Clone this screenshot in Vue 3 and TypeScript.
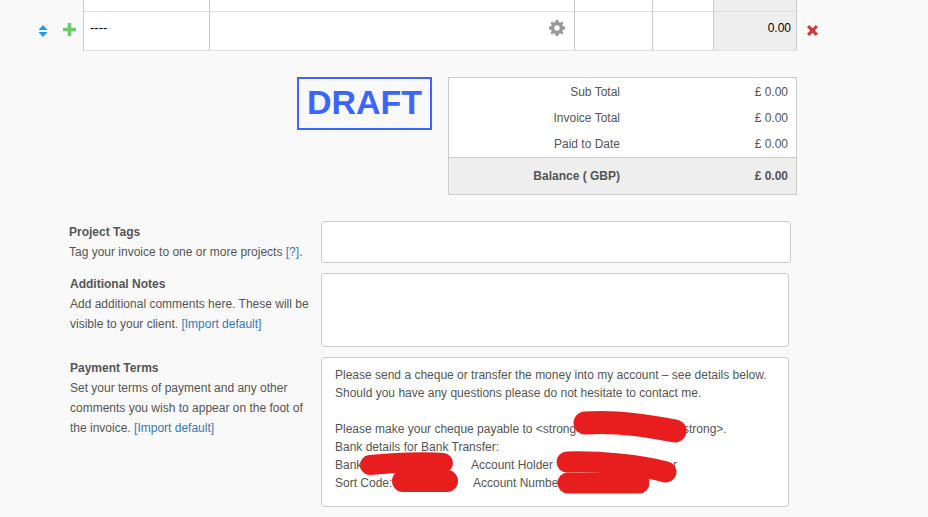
<template>
  <div class="page">
    <!-- line items -->
    <div class="items">
      <div class="row-tools">
        <svg class="sort" width="10" height="12" viewBox="0 0 10 12"><path d="M5 0 9.5 5H.5zM.5 7H9.5L5 12z" fill="#1e96f5" /></svg>
        <svg class="plus" width="13" height="13" viewBox="0 0 13 13"><path d="M4.7 0H8.3V4.7H13V8.3H8.3V13H4.7V8.3H0V4.7H4.7z" fill="#6cc96c" /></svg>
      </div>
      <div class="grid">
        <div class="cell top"></div>
        <div class="cell top"></div>
        <div class="cell top"></div>
        <div class="cell top"></div>
        <div class="cell top amount"></div>
        <div class="cell item-name">----</div>
        <div class="cell gear-cell">
          <svg width="16" height="16" viewBox="0 0 16 16">
            <path fill="#999" fill-rule="evenodd" d="M6.6 0H9.4L9.8 2.1 11.2 2.7 13 1.5 14.5 3 13.3 4.8 13.9 6.2 16 6.6V9.4L13.9 9.8 13.3 11.2 14.5 13 13 14.5 11.2 13.3 9.8 13.9 9.4 16H6.6L6.2 13.9 4.8 13.3 3 14.5 1.5 13 2.7 11.2 2.1 9.8 0 9.4V6.6L2.1 6.2 2.7 4.8 1.5 3 3 1.5 4.8 2.7 6.2 2.1ZM8 5.3A2.7 2.7 0 1 0 8 10.7 2.7 2.7 0 1 0 8 5.3Z" />
          </svg>
        </div>
        <div class="cell"></div>
        <div class="cell"></div>
        <div class="cell amount total-cell">0.00</div>
      </div>
      <svg class="remove" width="11" height="11" viewBox="0 0 11 11"><path d="M2.2 0 5.5 3.3 8.8 0 11 2.2 7.7 5.5 11 8.8 8.8 11 5.5 7.7 2.2 11 0 8.8 3.3 5.5 0 2.2z" fill="#cf3a35" /></svg>
    </div>

    <!-- draft stamp and totals -->
    <div class="summary">
      <div class="draft">DRAFT</div>
      <div class="totals">
        <div v-for="row in totals" :key="row" class="total-row">
          <span class="total-label">{{ row }}</span>
          <span class="total-value">£ 0.00</span>
        </div>
        <div class="balance">
          <span class="total-label">Balance ( GBP)</span>
          <span class="total-value">£ 0.00</span>
        </div>
      </div>
    </div>

    <!-- notes fields -->
    <div class="field tags">
      <div class="field-text tags-text">
        <strong>Project Tags</strong>
        <p>Tag your invoice to one or more projects <a>[?]</a>.</p>
      </div>
      <div class="box tags-box"></div>
    </div>
    <div class="field notes">
      <div class="field-text">
        <strong>Additional Notes</strong>
        <p>Add additional comments here. These will be</p>
        <p>visible to your client. <a>[Import default]</a></p>
      </div>
      <div class="box notes-box"></div>
    </div>
    <div class="field terms">
      <div class="field-text">
        <strong>Payment Terms</strong>
        <p>Set your terms of payment and any other</p>
        <p>comments you wish to appear on the foot of</p>
        <p>the invoice. <a>[Import default]</a></p>
      </div>
      <div class="box terms-box">
        <div v-for="(line, i) in termsLines" :key="i" class="terms-line">
          <span
            v-for="part in line"
            :key="part.text"
            class="terms-part"
            :style="part.width ? { width: part.width + 'px' } : undefined"
          >{{ part.text }}</span>
        </div>
      </div>
    </div>

    <!-- red marker over private details -->
    <svg class="scribble" width="928" height="517" viewBox="0 0 928 517">
      <g fill="none" stroke="#e81e1e" stroke-linecap="round" stroke-linejoin="round">
        <path d="M585 423 C610 421 640 424 675 431" stroke-width="23" />
        <path d="M370 465 C390 463 425 461 443 463" stroke-width="20" />
        <path d="M403 481 H447" stroke-width="22" />
        <path d="M567 462 C600 461 640 465 666 472" stroke-width="21" />
        <path d="M568 483 H639" stroke-width="21" />
      </g>
    </svg>
  </div>
</template>

<script setup lang="ts">
interface TermsPart {
  text: string
  width?: number
}

const totals = ['Sub Total', 'Invoice Total', 'Paid to Date']

// widths leave room for the parts hidden under the marker
const termsLines: TermsPart[][] = [
  [{ text: 'Please send a cheque or transfer the money into my account – see details below.' }],
  [{ text: 'Should you have any questions please do not hesitate to contact me.' }],
  [{ text: '\u00a0' }],
  [{ text: 'Please make your cheque payable to <strong', width: 348 }, { text: 'strong>.' }],
  [{ text: 'Bank details for Bank Transfer:' }],
  [{ text: 'Bank', width: 136 }, { text: 'Account Holder', width: 202 }, { text: 'r' }],
  [{ text: 'Sort Code:', width: 138 }, { text: 'Account Numbe' }],
]
</script>

<style>
html,
body {
  margin: 0;
  background: #f9f9f9;
  overflow: hidden;
}
</style>

<style scoped>
.page {
  position: relative;
  width: 928px;
  height: 517px;
  overflow: hidden;
  background: #f9f9f9;
  font-family: "Liberation Sans", Arial, sans-serif;
  font-size: 12px;
  color: #555;
}

.items {
  display: flex;
  align-items: flex-start;
  height: 77px;
}

.row-tools {
  display: flex;
  align-items: flex-start;
  width: 83px;
  height: 13px;
  margin-top: 23px;
  padding-left: 38px;
  box-sizing: border-box;
}

.sort {
  margin-top: 2px;
}

.plus {
  margin-left: 15px;
}

.grid {
  display: grid;
  grid-template-columns: 126px 365px 78px 61px 83px;
  grid-template-rows: 12px 39px;
  width: 714px;
  border-left: 1px solid #ccc;
  box-sizing: border-box;
}

.cell {
  background: #fff;
  border-right: 1px solid #ccc;
  border-bottom: 1px solid #e0e0e0;
  box-sizing: border-box;
}

.amount {
  background: #eee;
}

.item-name {
  padding: 8px 0 0 6px;
  font-size: 13px;
  line-height: 16px;
  color: #000;
}

.gear-cell {
  display: flex;
  justify-content: flex-end;
  padding: 8px 9px 0 0;
}

.total-cell {
  padding: 8px 5px 0 0;
  text-align: right;
  font-size: 12px;
  line-height: 16px;
  color: #000;
}

.remove {
  margin: 25px 0 0 10px;
}

.summary {
  display: flex;
  align-items: flex-start;
  height: 144px;
  padding-left: 297px;
}

.draft {
  width: 135px;
  height: 53px;
  box-sizing: border-box;
  border: 2px solid #3a66ff;
  color: #3a66ff;
  font-size: 34px;
  font-weight: 700;
  line-height: 47px;
  text-align: center;
}

.totals {
  width: 349px;
  height: 118px;
  margin-left: 16px;
  box-sizing: border-box;
  background: #fff;
  border: 1px solid #ccc;
  padding-top: 1px;
}

.total-row,
.balance {
  display: flex;
  line-height: 26px;
}

.total-label {
  width: 171px;
  text-align: right;
}

.total-value {
  width: 168px;
  text-align: right;
}

.balance {
  height: 37px;
  box-sizing: border-box;
  line-height: 36px;
  background: #eee;
  border-top: 1px solid #ccc;
  font-weight: 700;
}

.field {
  display: flex;
  align-items: flex-start;
  padding-left: 70px;
}

.field-text {
  width: 251px;
  padding: 1px 10px 0 0;
  box-sizing: border-box;
  line-height: 20px;
  white-space: nowrap;
}

.field-text strong {
  display: block;
}

.field-text p {
  margin: 0;
}

.field-text a {
  color: #337ab7;
}

.tags-text {
  margin-left: -1px;
  width: 252px;
  padding-right: 0;
}

.tags {
  height: 52px;
}

.notes {
  height: 84px;
}

.box {
  background: #fff;
  border: 1px solid #ccc;
  border-radius: 3px;
  box-sizing: border-box;
}

.tags-box {
  width: 470px;
  height: 42px;
}

.notes-box {
  width: 468px;
  height: 74px;
}

.terms-box {
  width: 468px;
  height: 150px;
  padding: 8px 13px;
  line-height: 18px;
  white-space: nowrap;
}

.terms-line {
  height: 18px;
}

.terms-part {
  display: inline-block;
}

.scribble {
  position: absolute;
  left: 0;
  top: 0;
  pointer-events: none;
}
</style>
